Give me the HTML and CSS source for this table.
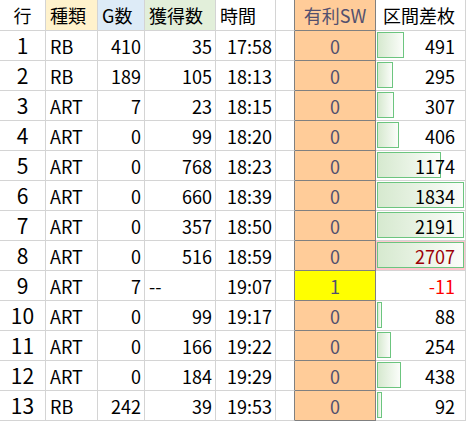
FILE: index.html
```html
<!DOCTYPE html>
<html lang="ja">
<head>
<meta charset="utf-8">
<link rel="stylesheet" href="styles.css">
</head>
<body>
<div class="sheet">
  <div class="c rn h">行</div>
  <div class="c l h kind">種類</div>
  <div class="c l h gcnt">G数</div>
  <div class="c l h got">獲得数</div>
  <div class="c l h">時間</div>
  <div class="c gap"></div>
  <div class="c sw h">有利SW</div>
  <div class="c diff h">区間差枚</div>

  <div class="c rn">1</div><div class="c l">RB</div><div class="c r">410</div><div class="c r">35</div><div class="c r">17:58</div><div class="c gap"></div><div class="c sw">0</div><div class="c diff"><span class="bar" style="width:27px"></span><span class="v">491</span></div>
  <div class="c rn">2</div><div class="c l">RB</div><div class="c r">189</div><div class="c r">105</div><div class="c r">18:13</div><div class="c gap"></div><div class="c sw">0</div><div class="c diff"><span class="bar" style="width:16px"></span><span class="v">295</span></div>
  <div class="c rn">3</div><div class="c l">ART</div><div class="c r">7</div><div class="c r">23</div><div class="c r">18:15</div><div class="c gap"></div><div class="c sw">0</div><div class="c diff"><span class="bar" style="width:17px"></span><span class="v">307</span></div>
  <div class="c rn">4</div><div class="c l">ART</div><div class="c r">0</div><div class="c r">99</div><div class="c r">18:20</div><div class="c gap"></div><div class="c sw">0</div><div class="c diff"><span class="bar" style="width:22px"></span><span class="v">406</span></div>
  <div class="c rn">5</div><div class="c l">ART</div><div class="c r">0</div><div class="c r">768</div><div class="c r">18:23</div><div class="c gap"></div><div class="c sw">0</div><div class="c diff"><span class="bar" style="width:64px"></span><span class="v">1174</span></div>
  <div class="c rn">6</div><div class="c l">ART</div><div class="c r">0</div><div class="c r">660</div><div class="c r">18:39</div><div class="c gap"></div><div class="c sw">0</div><div class="c diff"><span class="bar" style="width:87px"></span><span class="v">1834</span></div>
  <div class="c rn">7</div><div class="c l">ART</div><div class="c r">0</div><div class="c r">357</div><div class="c r">18:50</div><div class="c gap"></div><div class="c sw">0</div><div class="c diff"><span class="bar" style="width:87px"></span><span class="v">2191</span></div>
  <div class="c rn">8</div><div class="c l">ART</div><div class="c r">0</div><div class="c r">516</div><div class="c r">18:59</div><div class="c gap"></div><div class="c sw">0</div><div class="c diff hot"><span class="bar" style="width:87px"></span><span class="v">2707</span></div>
  <div class="c rn">9</div><div class="c l">ART</div><div class="c r">7</div><div class="c l">--</div><div class="c r">19:07</div><div class="c gap"></div><div class="c sw on">1</div><div class="c diff neg"><span class="v">-11</span></div>
  <div class="c rn">10</div><div class="c l">ART</div><div class="c r">0</div><div class="c r">99</div><div class="c r">19:17</div><div class="c gap"></div><div class="c sw">0</div><div class="c diff"><span class="bar" style="width:5px"></span><span class="v">88</span></div>
  <div class="c rn">11</div><div class="c l">ART</div><div class="c r">0</div><div class="c r">166</div><div class="c r">19:22</div><div class="c gap"></div><div class="c sw">0</div><div class="c diff"><span class="bar" style="width:14px"></span><span class="v">254</span></div>
  <div class="c rn">12</div><div class="c l">ART</div><div class="c r">0</div><div class="c r">184</div><div class="c r">19:29</div><div class="c gap"></div><div class="c sw">0</div><div class="c diff"><span class="bar" style="width:24px"></span><span class="v">438</span></div>
  <div class="c rn">13</div><div class="c l">RB</div><div class="c r">242</div><div class="c r">39</div><div class="c r">19:53</div><div class="c gap"></div><div class="c sw">0</div><div class="c diff"><span class="bar" style="width:5px"></span><span class="v">92</span></div>
</div>
</body>
</html>
```

FILE: styles.css
```css
html, body {
  margin: 0;
  padding: 0;
  background: #ffffff;
}

.sheet {
  display: grid;
  grid-template-columns: 46px 52px 47px 71px 60px 19px 81px 90px;
  grid-template-rows: 31px repeat(13, 30px);
  width: 466px;
  font-family: "Noto Sans CJK JP", "Noto Sans", sans-serif;
  font-size: 18px;
  color: #000000;
}

.c {
  box-sizing: border-box;
  border-right: 1px solid #d4d4d4;
  border-bottom: 1px solid #d4d4d4;
  display: flex;
  align-items: center;
  white-space: nowrap;
  line-height: 1;
  overflow: hidden;
}

.l {
  justify-content: flex-start;
  padding-left: 4px;
}

.r {
  justify-content: flex-end;
  padding-right: 3px;
}

.rn {
  justify-content: center;
  font-size: 21px;
}

.h.rn {
  font-size: 18px;
}

.kind { background: #fff2cc; }
.gcnt { background: #ddebf7; }
.got { background: #e2efda; }

.gap {
  border-right-color: #808080;
}

.sw {
  justify-content: center;
  background: #ffcc99;
  color: #53506e;
  border-right-color: #808080;
  border-bottom-color: #808080;
}

.sw.on {
  background: #ffff00;
}

.diff {
  position: relative;
  justify-content: flex-end;
  padding-right: 10px;
}

.diff .v {
  position: relative;
}

.bar {
  position: absolute;
  left: 1px;
  top: 1px;
  bottom: 2px;
  box-sizing: border-box;
  border: 1px solid #6cc57f;
  background: linear-gradient(90deg, #d6e9cf 0%, #fbfdfa 100%);
}

.hot {
  background: #ffc7ce;
  color: #9c0006;
}

.neg {
  color: #ff0000;
}
```
